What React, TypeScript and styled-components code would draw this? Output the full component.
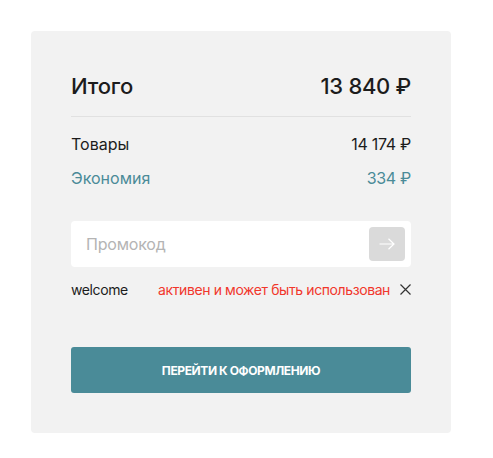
import styled, { createGlobalStyle } from "styled-components";

const GlobalStyle = createGlobalStyle`
  body {
    margin: 0;
    background: #ffffff;
    font-family: Inter, "Noto Sans", "Liberation Sans", sans-serif;
    color: #1c1c1c;
  }
`;

const Page = styled.div`
  padding: 31px 0 0 31px;
`;

const Card = styled.section`
  width: 420px;
  box-sizing: border-box;
  padding: 40px;
  background: #f2f2f2;
  border-radius: 4px;
`;

const TotalRow = styled.div`
  display: flex;
  justify-content: space-between;
  align-items: center;
  height: 30px;
  font-size: 22px;
  font-weight: 500;
  letter-spacing: -0.2px;
  padding-bottom: 15px;
  border-bottom: 1px solid #e1e1e1;
`;

const Lines = styled.div`
  display: flex;
  flex-direction: column;
  gap: 10px;
  margin-top: 15px;
`;

const Line = styled.div<{ $accent?: boolean }>`
  display: flex;
  justify-content: space-between;
  align-items: center;
  height: 24px;
  font-size: 16px;
  color: ${(p) => (p.$accent ? "#4a8b98" : "#1c1c1c")};
`;

const Price = styled.span`
  letter-spacing: -0.3px;
`;

const PromoField = styled.div`
  display: flex;
  align-items: center;
  margin-top: 31px;
  height: 46px;
  padding: 0 6px 0 13px;
  background: #ffffff;
  border-radius: 4px;
`;

const PromoInput = styled.input`
  flex: 1;
  border: none;
  outline: none;
  background: transparent;
  font-family: inherit;
  font-size: 16px;
  letter-spacing: -0.2px;
  color: #1c1c1c;
  &::placeholder {
    color: #b4b4b4;
  }
`;

const ApplyButton = styled.button`
  display: flex;
  align-items: center;
  justify-content: center;
  width: 36px;
  height: 34px;
  padding: 0;
  border: none;
  border-radius: 4px;
  background: #dadada;
`;

const PromoStatus = styled.div`
  display: flex;
  justify-content: space-between;
  align-items: center;
  margin-top: 12px;
  height: 20px;
  font-size: 14px;
  letter-spacing: -0.4px;
`;

const Code = styled.span`
  color: #1c1c1c;
`;

const StatusGroup = styled.div`
  display: flex;
  align-items: center;
  gap: 10px;
`;

const StatusText = styled.span`
  color: #f1372c;
`;

const RemoveButton = styled.button`
  display: flex;
  padding: 0;
  border: none;
  background: none;
`;

const CheckoutButton = styled.button`
  display: block;
  width: 100%;
  height: 46px;
  margin-top: 48px;
  border: none;
  border-radius: 3px;
  background: #4a8b98;
  color: #ffffff;
  font-family: inherit;
  font-size: 12px;
  font-weight: 700;
  letter-spacing: -0.4px;
  text-transform: uppercase;
`;

export default function App() {
  return (
    <Page>
      <GlobalStyle />
      <Card>
        <TotalRow>
          <span>Итого</span>
          <Price>13 840 ₽</Price>
        </TotalRow>
        <Lines>
          <Line>
            <span>Товары</span>
            <Price>14 174 ₽</Price>
          </Line>
          <Line $accent>
            <span>Экономия</span>
            <Price>334 ₽</Price>
          </Line>
        </Lines>
        <PromoField>
          <PromoInput placeholder="Промокод" />
          <ApplyButton aria-label="Применить">
            <svg width="16" height="12" viewBox="0 0 16 12" fill="none">
              <path d="M0.5 6h14.5M9.5 0.8L15 6l-5.5 5.2" stroke="#ffffff" strokeWidth="1.2" />
            </svg>
          </ApplyButton>
        </PromoField>
        <PromoStatus>
          <Code>welcome</Code>
          <StatusGroup>
            <StatusText>активен и может быть использован</StatusText>
            <RemoveButton aria-label="Удалить">
              <svg width="11" height="11" viewBox="0 0 11 11" fill="none">
                <path d="M0.5 0.5l10 10M10.5 0.5l-10 10" stroke="#333333" strokeWidth="1.2" />
              </svg>
            </RemoveButton>
          </StatusGroup>
        </PromoStatus>
        <CheckoutButton>Перейти к оформлению</CheckoutButton>
      </Card>
    </Page>
  );
}
